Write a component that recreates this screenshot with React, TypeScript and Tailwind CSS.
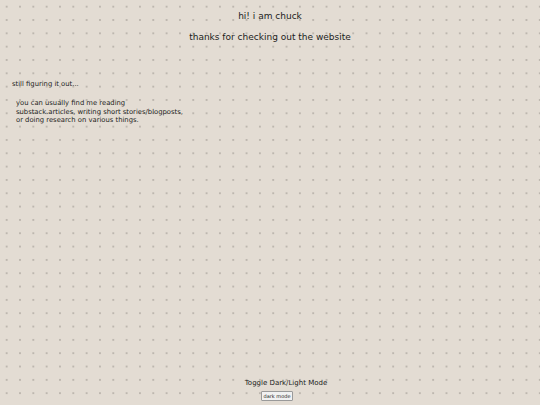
import React from "react";

export default function App() {
  return (
    <div
      className="min-h-screen w-full flex flex-col bg-[#e3dcd3] text-[#1c1c1c]"
      style={{
        fontFamily: '"DejaVu Sans", Verdana, sans-serif',
        backgroundImage: "radial-gradient(circle, #a39d96 0.55px, transparent 0.85px)",
        backgroundSize: "13.333px 13.333px",
        backgroundPosition: "0px 0px",
      }}
    >
      <header className="flex flex-col items-center pt-[10px]">
        <h1 className="text-[9px] leading-[12px] font-normal">hi! i am chuck</h1>
        <p className="text-[9px] leading-[12px] mt-[9px]">thanks for checking out the website</p>
      </header>
      <main className="flex-1 pl-[12px] pt-[37px]">
        <p className="text-[6.8px] leading-[9px]">still figuring it out...</p>
        <div className="pl-[4px] pt-[10px] text-[6.8px] leading-[8.5px]">
          <p>you can usually find me reading</p>
          <p>substack.articles, writing short stories/blogposts,</p>
          <p>or doing research on various things.</p>
        </div>
      </main>
      <footer className="flex flex-col items-center pb-[4px]">
        <p className="text-[7px] leading-[9px] ml-[32px]">Toggle Dark/Light Mode</p>
        <button className="mt-[3px] ml-[14px] text-[5px] leading-[6px] px-[2px] py-[1px] bg-[#f1f1f1] border border-[#9a9a9a] rounded-[1px]">
          dark mode
        </button>
      </footer>
    </div>
  );
}
